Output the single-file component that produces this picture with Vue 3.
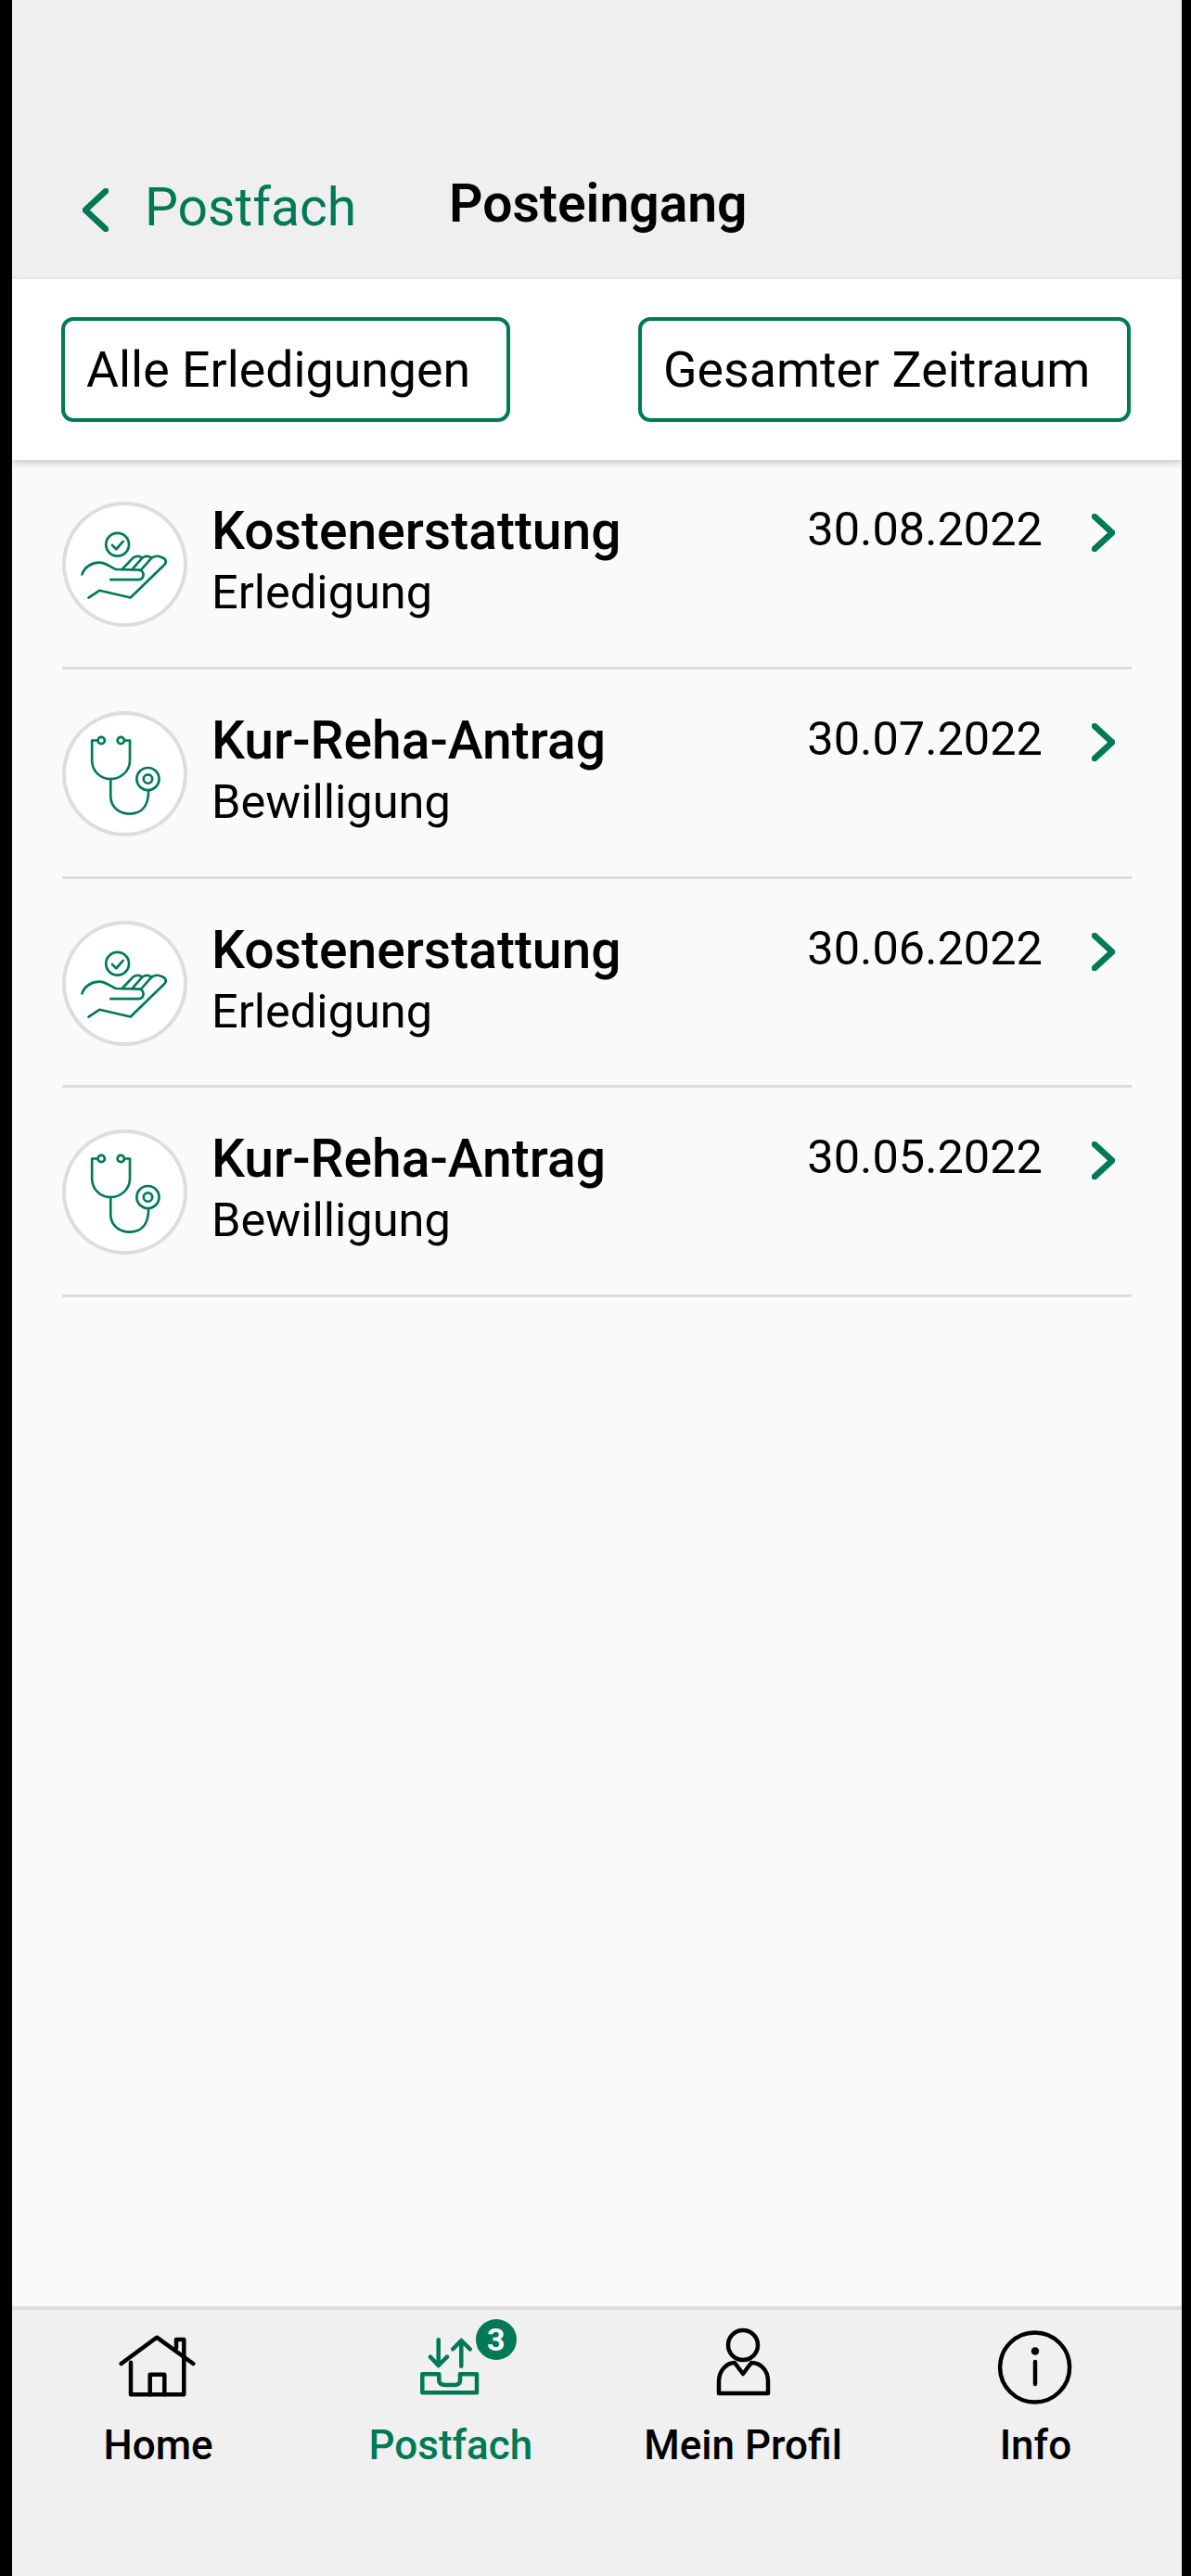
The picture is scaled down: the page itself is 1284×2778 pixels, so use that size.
<template>
  <div class="screen">
    <div class="app">
      <header class="topbar">
        <a class="back">
          <svg class="back-icon" viewBox="0 0 28 47">
            <path d="M25 3 L3 23.5 L25 44" />
          </svg>
          <span>Postfach</span>
        </a>
        <h1 class="title">Posteingang</h1>
      </header>

      <div class="filters">
        <button class="filter filter-type">Alle Erledigungen</button>
        <button class="filter filter-time">Gesamter Zeitraum</button>
      </div>

      <main class="list">
        <div v-for="item in items" :key="item.date" class="row">
          <div class="avatar">
            <svg v-if="item.icon === 'hand'" viewBox="52 62 403 403">
              <circle cx="230" cy="200" r="37" />
              <path d="M213 202 L226 215 L248 190" />
              <path d="M116 296 C125 270 150 258 172 258 C192 258 205 272 225 280 L300 282 C318 284 318 313 298 313 L208 313" />
              <path d="M245 280 L280 243 Q295 233 310 243 Q325 233 340 243 Q355 233 372 241 C388 246 390 258 378 268 L272 371 L172 348 L137 371" />
              <path d="M310 243 L277 280 M340 243 L307 280" />
            </svg>
            <svg v-else viewBox="52 62 403 403">
              <circle cx="178" cy="156" r="11" />
              <circle cx="241" cy="156" r="11" />
              <path d="M167 156 L148 156 L148 220 C148 255 175 280 208 280 C240 280 270 255 270 220 L270 156 L252 156" />
              <path d="M208 280 L208 335 C208 370 235 392 270 392 C305 392 330 370 330 318" />
              <circle cx="328" cy="280" r="36" />
              <circle cx="328" cy="280" r="14" />
            </svg>
          </div>
          <div class="texts">
            <div class="name">{{ item.name }}</div>
            <div class="kind">{{ item.kind }}</div>
          </div>
          <div class="date">{{ item.date }}</div>
          <svg class="chevron" viewBox="0 0 25 41">
            <path d="M3 3 L22 20.5 L3 38" />
          </svg>
        </div>
      </main>

      <nav class="tabs">
        <div class="tab">
          <svg class="tab-icon" viewBox="111 2505 120 100">
            <path d="M130.7 2549 L169 2520.7 L208.3 2549" />
            <path d="M141 2547.7 V2582.3 H198.3 V2523 H190 V2532" />
            <path d="M161.7 2582.3 V2560.7 H177.3 V2582.3" />
          </svg>
          <span>Home</span>
        </div>
        <div class="tab active">
          <div class="tab-icon-wrap">
            <svg class="tab-icon" viewBox="426 2505 120 100">
              <path d="M455.3 2560.3 H473.3 V2567 C473.3 2571 477 2572 480 2572 H490 C494 2572 496 2570 496 2567 V2560.3 H514 V2580.3 H455.3 Z" />
              <path d="M472.7 2523.3 V2551 M464 2541.7 L472.7 2551 L482 2541.7" />
              <path d="M497.3 2551.7 V2525 M488.3 2533.3 L497.3 2524 L506.7 2533.3" />
            </svg>
            <span class="badge">3</span>
          </div>
          <span>Postfach</span>
        </div>
        <div class="tab">
          <svg class="tab-icon" viewBox="741 2505 120 100">
            <circle cx="801" cy="2529" r="16" />
            <path d="M775 2581 V2568 C775 2556 784 2548 792 2548 L801 2560 L810 2548 C820 2548 828 2556 828 2568 V2581 Z" />
          </svg>
          <span>Mein Profil</span>
        </div>
        <div class="tab">
          <svg class="tab-icon" viewBox="1056 2505 120 100">
            <circle cx="1115.6" cy="2553" r="37.5" />
            <path d="M1116 2547 V2571" />
            <circle class="dot" cx="1116" cy="2535.5" r="2" />
          </svg>
          <span>Info</span>
        </div>
      </nav>
    </div>
  </div>
</template>

<script setup>
const items = [
  { name: "Kostenerstattung", kind: "Erledigung", date: "30.08.2022", icon: "hand" },
  { name: "Kur-Reha-Antrag", kind: "Bewilligung", date: "30.07.2022", icon: "scope" },
  { name: "Kostenerstattung", kind: "Erledigung", date: "30.06.2022", icon: "hand" },
  { name: "Kur-Reha-Antrag", kind: "Bewilligung", date: "30.05.2022", icon: "scope" },
];
</script>

<style>
html,
body {
  margin: 0;
  background: #000;
}
</style>

<style scoped>
.screen {
  width: 1284px;
  height: 2778px;
  box-sizing: border-box;
  padding: 0 10px 0 13px;
  background: #000;
  font-family: Roboto, "Liberation Sans", sans-serif;
  color: #000;
  overflow: hidden;
}
.app {
  height: 100%;
  display: flex;
  flex-direction: column;
  background: #fafafa;
}
.topbar {
  height: 301px;
  flex: none;
  box-sizing: border-box;
  padding: 187px 0 0 76px;
  display: flex;
  align-items: flex-start;
  background: #efefef;
}
.back {
  display: flex;
  align-items: center;
  gap: 39px;
  width: 395px;
  flex: none;
  margin-top: 2px;
  color: #007a56;
  font-size: 57px;
  line-height: 70px;
  font-weight: 400;
}
.back-icon {
  width: 28px;
  height: 47px;
  flex: none;
  margin-top: 5px;
  fill: none;
  stroke: #007a56;
  stroke-width: 6.5;
  stroke-linecap: round;
  stroke-linejoin: round;
}
.title {
  margin: 0;
  font-size: 57px;
  line-height: 66px;
  font-weight: 600;
}
.filters {
  height: 195px;
  flex: none;
  box-sizing: border-box;
  padding: 41px 55px 0 53px;
  display: flex;
  justify-content: space-between;
  align-items: flex-start;
  background: #fff;
  box-shadow: 0 3px 8px rgba(0, 0, 0, 0.2);
  position: relative;
}
.filter {
  height: 113px;
  box-sizing: border-box;
  border: 4px solid #007a56;
  border-radius: 13px;
  background: #fff;
  font: inherit;
  font-size: 53.7px;
  color: #000;
  padding: 0 0 0 23px;
  text-align: left;
}
.filter-type {
  width: 484px;
}
.filter-time {
  width: 531px;
}
.list {
  flex: 1;
  padding: 0 54px;
}
.row {
  height: 225.75px;
  box-sizing: border-box;
  display: flex;
  align-items: flex-start;
  padding-top: 45px;
  border-bottom: 3px solid #ddd;
}
.avatar {
  width: 135px;
  height: 135px;
  flex: none;
  box-sizing: border-box;
  border-radius: 50%;
  background: #fff;
  box-shadow: inset 0 0 0 4px #ddd;
}
.avatar svg {
  display: block;
  width: 135px;
  height: 135px;
  fill: none;
  stroke: #007a56;
  stroke-width: 8;
  stroke-linecap: round;
  stroke-linejoin: round;
}
.texts {
  margin: -1px 0 0 26px;
  flex: 1;
}
.name {
  font-size: 57px;
  line-height: 66px;
  font-weight: 500;
}
.kind {
  font-size: 50.5px;
  line-height: 66px;
}
.date {
  margin-top: -3px;
  font-size: 50.5px;
  line-height: 66px;
}
.chevron {
  width: 25px;
  height: 41px;
  flex: none;
  margin: 13px 18px 0 53px;
  fill: none;
  stroke: #007a56;
  stroke-width: 6.5;
  stroke-linecap: round;
  stroke-linejoin: round;
}
.tabs {
  flex: none;
  height: 291px;
  box-sizing: border-box;
  border-top: 4px solid #ddd;
  padding-top: 14px;
  display: grid;
  grid-template-columns: repeat(4, 1fr);
  align-content: start;
  background: #f0f0f0;
}
.tab {
  display: flex;
  flex-direction: column;
  align-items: center;
  gap: 6px;
  font-size: 44px;
  line-height: 52px;
  font-weight: 500;
}
.tab.active {
  color: #007a56;
}
.tab-icon-wrap {
  position: relative;
  height: 100px;
}
.tab-icon {
  display: block;
  width: 120px;
  height: 100px;
  fill: none;
  stroke: #000;
  stroke-width: 4.5;
  stroke-linecap: round;
  stroke-linejoin: round;
}
.active .tab-icon {
  stroke: #007a56;
}
.tab-icon .dot {
  fill: #000;
}
.badge {
  position: absolute;
  left: 87px;
  top: -4px;
  width: 44px;
  height: 44px;
  border-radius: 50%;
  background: #007a56;
  color: #fff;
  font-size: 34px;
  line-height: 44px;
  font-weight: 700;
  text-align: center;
}
</style>
